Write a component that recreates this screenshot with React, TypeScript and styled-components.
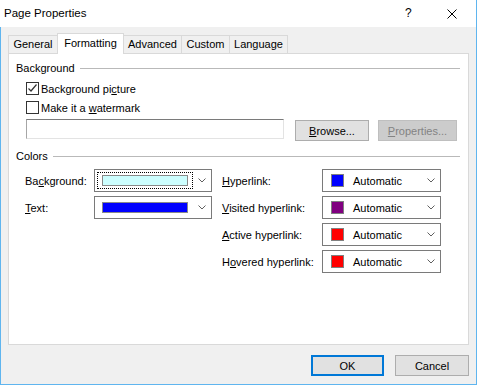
import React from 'react'
import styled, { createGlobalStyle } from 'styled-components'

const GlobalStyle = createGlobalStyle`
  html, body {
    margin: 0;
    padding: 0;
    background: #fff;
  }
  body {
    font-family: "Liberation Sans", Arial, sans-serif;
    font-size: 11px;
    color: #000;
  }
`

const Window = styled.div`
  width: 477px;
  height: 385px;
  box-sizing: border-box;
  display: flex;
  flex-direction: column;
  border-right: 1px solid #5fb5ef;
  border-bottom: 1px solid #5fb5ef;
  background: #f0f0f0;
`

const TitleBar = styled.div`
  height: 27px;
  flex-shrink: 0;
  display: flex;
  align-items: center;
  padding-left: 4px;
  background: #fff;
`

const TitleText = styled.div`
  flex: 1;
  font-size: 11.5px;
  padding-bottom: 1px;
`

const HelpMark = styled.div`
  width: 10px;
  font-size: 12px;
  margin-right: 32px;
  padding-bottom: 1px;
`

const CloseIcon = styled.svg`
  width: 10px;
  height: 10px;
  margin-right: 19px;
`

const Body = styled.div`
  flex: 1;
  display: flex;
  flex-direction: column;
  padding: 6px 7px 8px 7px;
  border-left: 1px solid #5fb5ef;
`

const TabRow = styled.div`
  display: flex;
  align-items: flex-end;
  height: 20px;
  position: relative;
  z-index: 1;
`

const Tab = styled.div<{ $active?: boolean; $width: number }>`
  box-sizing: border-box;
  width: ${(p) => p.$width}px;
  height: ${(p) => (p.$active ? '21px' : '18px')};
  margin-bottom: ${(p) => (p.$active ? '-1px' : '0')};
  padding-top: ${(p) => (p.$active ? '3px' : '2px')};
  border: 1px solid #d9d9d9;
  border-bottom: none;
  margin-left: -1px;
  background: ${(p) => (p.$active ? '#fff' : '#f0f0f0')};
  text-align: center;
  white-space: nowrap;

  &:first-child {
    margin-left: 0;
  }
`

const Panel = styled.div`
  flex: 1;
  background: #fff;
  border: 1px solid #d9d9d9;
  padding: 7px 8px 0 7px;
`

const GroupHeader = styled.div`
  display: flex;
  align-items: center;
  height: 14px;
`

const GroupLine = styled.div`
  flex: 1;
  height: 1px;
  margin-left: 5px;
  background: #b9b9b9;
`

const GroupContent = styled.div<{ $indent: number }>`
  display: flex;
  flex-direction: column;
  margin-left: ${(p) => p.$indent}px;
`

const CheckRows = styled.div`
  display: flex;
  flex-direction: column;
  gap: 4px;
  margin-top: 6px;
`

const CheckRow = styled.label`
  display: flex;
  align-items: center;
  height: 15px;
  gap: 2px;
`

const CheckBox = styled.span`
  box-sizing: border-box;
  width: 13px;
  height: 13px;
  border: 1px solid #333;
  background: #fff;
  display: flex;
  align-items: center;
  justify-content: center;
`

const FileRow = styled.div`
  display: flex;
  align-items: flex-start;
  margin-top: 4px;
`

const TextField = styled.div`
  box-sizing: border-box;
  width: 258px;
  height: 20px;
  border: 1px solid #e3e3e3;
  border-top-color: #7a7a7a;
  border-left-color: #a6a6a6;
  background: #fff;
`

const Button = styled.div<{ $width: number; $disabled?: boolean; $default?: boolean }>`
  box-sizing: border-box;
  width: ${(p) => p.$width}px;
  height: 21px;
  display: flex;
  align-items: center;
  justify-content: center;
  background: ${(p) => (p.$disabled ? '#cccccc' : '#e1e1e1')};
  border: ${(p) => (p.$default ? '2px solid #0078d7' : `1px solid ${p.$disabled ? '#bfbfbf' : '#adadad'}`)};
  color: ${(p) => (p.$disabled ? '#838383' : '#000')};
`

const BrowseButton = styled(Button)`
  margin-left: 11px;
  margin-top: 1px;
`

const PropertiesButton = styled(Button)`
  margin-left: 9px;
  margin-top: 1px;
`

const ColorsHeader = styled(GroupHeader)`
  margin-top: 8px;
`

const ColorsArea = styled.div`
  display: flex;
  margin-top: 6px;
  margin-left: 9px;
`

const ColorGrid = styled.div<{ $labelWidth: number; $comboWidth: number }>`
  display: grid;
  grid-template-columns: ${(p) => p.$labelWidth}px ${(p) => p.$comboWidth}px;
  grid-auto-rows: 23px;
  row-gap: 4px;
  align-items: center;
  align-content: start;
  white-space: nowrap;
`

const RightGrid = styled(ColorGrid)`
  margin-left: 10px;
`

const Combo = styled.div`
  box-sizing: border-box;
  height: 23px;
  border: 1px solid #7a7a7a;
  background: #fff;
  display: flex;
  align-items: center;
`

const FocusBox = styled.div<{ $focused?: boolean }>`
  box-sizing: border-box;
  width: 96px;
  height: 17px;
  margin-left: 2px;
  border: 1px ${(p) => (p.$focused ? 'dotted #000' : 'solid transparent')};
  display: flex;
  align-items: center;
  padding-left: 4px;
`

const WideSwatch = styled.div<{ $color: string }>`
  box-sizing: border-box;
  width: 86px;
  height: 11px;
  border: 1px solid #8a8a8a;
  background: ${(p) => p.$color};
`

const SmallSwatch = styled.div<{ $color: string }>`
  box-sizing: border-box;
  width: 13px;
  height: 13px;
  margin-left: 8px;
  border: 1px solid #808080;
  background: ${(p) => p.$color};
`

const ComboText = styled.span`
  flex: 1;
  margin-left: 9px;
`

const Chevron = styled.svg`
  width: 8px;
  height: 5px;
  margin-left: auto;
  margin-right: 5px;
  flex-shrink: 0;
`

const Footer = styled.div`
  display: flex;
  justify-content: flex-end;
  gap: 11px;
  margin-top: 10px;
`

const ChevronDown = () => (
  <Chevron viewBox='0 0 8 5'>
    <polyline points='0.5,0.5 4,4 7.5,0.5' fill='none' stroke='#606060' strokeWidth='1' />
  </Chevron>
)

const linkRows = [
  { label: <><u>H</u>yperlink:</>, color: '#0000ff' },
  { label: <><u>V</u>isited hyperlink:</>, color: '#800080' },
  { label: <><u>A</u>ctive hyperlink:</>, color: '#ff0000' },
  { label: <>H<u>o</u>vered hyperlink:</>, color: '#ff0000' },
]

const tabs = [
  { name: 'General', width: 50 },
  { name: 'Formatting', width: 67 },
  { name: 'Advanced', width: 59 },
  { name: 'Custom', width: 49 },
  { name: 'Language', width: 59 },
]

const PageProperties = () => {
  return (
    <Window>
      <GlobalStyle />
      <TitleBar>
        <TitleText>Page Properties</TitleText>
        <HelpMark>?</HelpMark>
        <CloseIcon viewBox='0 0 10 10'>
          <path d='M0.5 0.5 L9.5 9.5 M9.5 0.5 L0.5 9.5' stroke='#000' strokeWidth='1' />
        </CloseIcon>
      </TitleBar>

      <Body>
        <TabRow>
          {tabs.map((t) => (
            <Tab key={t.name} $width={t.width} $active={t.name === 'Formatting'}>
              {t.name}
            </Tab>
          ))}
        </TabRow>

        <Panel>
          <GroupHeader>
            Background
            <GroupLine />
          </GroupHeader>
          <GroupContent $indent={10}>
            <CheckRows>
              <CheckRow>
                <CheckBox>
                  <svg width='11' height='11' viewBox='0 0 11 11'>
                    <polyline points='1.5,5.5 4,8 9.5,1.5' fill='none' stroke='#333' strokeWidth='1.2' />
                  </svg>
                </CheckBox>
                <span>
                  Background pi<u>c</u>ture
                </span>
              </CheckRow>
              <CheckRow>
                <CheckBox />
                <span>
                  Make it a <u>w</u>atermark
                </span>
              </CheckRow>
            </CheckRows>
            <FileRow>
              <TextField />
              <BrowseButton $width={74}>
                <span>
                  <u>B</u>rowse...
                </span>
              </BrowseButton>
              <PropertiesButton $width={79} $disabled>
                <span>
                  <u>P</u>roperties...
                </span>
              </PropertiesButton>
            </FileRow>
          </GroupContent>

          <ColorsHeader>
            Colors
            <GroupLine />
          </ColorsHeader>
          <ColorsArea>
            <ColorGrid $labelWidth={69} $comboWidth={118}>
              <span>
                Ba<u>c</u>kground:
              </span>
              <Combo>
                <FocusBox $focused>
                  <WideSwatch $color='#ccffff' />
                </FocusBox>
                <ChevronDown />
              </Combo>
              <span>
                <u>T</u>ext:
              </span>
              <Combo>
                <FocusBox>
                  <WideSwatch $color='#0000ff' />
                </FocusBox>
                <ChevronDown />
              </Combo>
            </ColorGrid>
            <RightGrid $labelWidth={100} $comboWidth={119}>
              {linkRows.map((row, i) => (
                <React.Fragment key={i}>
                  <span>{row.label}</span>
                  <Combo>
                    <SmallSwatch $color={row.color} />
                    <ComboText>Automatic</ComboText>
                    <ChevronDown />
                  </Combo>
                </React.Fragment>
              ))}
            </RightGrid>
          </ColorsArea>
        </Panel>

        <Footer>
          <Button $width={73} $default>
            OK
          </Button>
          <Button $width={74}>Cancel</Button>
        </Footer>
      </Body>
    </Window>
  )
}

export default PageProperties
